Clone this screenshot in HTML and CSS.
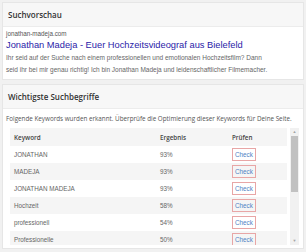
FILE: index.html
```html
<!DOCTYPE html>
<html lang="de">
<head>
  <meta charset="UTF-8">
  <meta name="viewport" content="width=device-width, initial-scale=1.0">
  <title>SEO Check</title>
  <link rel="stylesheet" href="styles.css">
</head>
<body>
  <section class="card">
    <h2 class="card-head">Suchvorschau</h2>
    <div class="card-body serp">
      <p class="serp-url">jonathan-madeja.com</p>
      <p class="serp-title">Jonathan Madeja - Euer Hochzeitsvideograf aus Bielefeld</p>
      <p class="serp-desc">Ihr seid auf der Suche nach einem professionellen und emotionalen Hochzeitsfilm? Dann seid ihr bei mir genau richtig! Ich bin Jonathan Madeja und leidenschaftlicher Filmemacher.</p>
    </div>
  </section>

  <section class="card">
    <h2 class="card-head">Wichtigste Suchbegriffe</h2>
    <div class="card-body">
      <p class="intro">Folgende Keywords wurden erkannt. Überprüfe die Optimierung dieser Keywords für Deine Seite.</p>
      <div class="table-wrap">
        <div class="table-clip">
          <table class="keywords">
            <thead>
              <tr><th>Keyword</th><th>Ergebnis</th><th>Prüfen</th></tr>
            </thead>
            <tbody>
              <tr><td>JONATHAN</td><td>93%</td><td><a href="#" class="check">Check</a></td></tr>
              <tr><td>MADEJA</td><td>93%</td><td><a href="#" class="check">Check</a></td></tr>
              <tr><td>JONATHAN MADEJA</td><td>93%</td><td><a href="#" class="check">Check</a></td></tr>
              <tr><td>Hochzeit</td><td>58%</td><td><a href="#" class="check">Check</a></td></tr>
              <tr><td>professionell</td><td>54%</td><td><a href="#" class="check">Check</a></td></tr>
              <tr><td>Professionelle</td><td>50%</td><td><a href="#" class="check">Check</a></td></tr>
              <tr><td>Filmemacher</td><td>47%</td><td><a href="#" class="check">Check</a></td></tr>
            </tbody>
          </table>
        </div>
        <div class="scrollbar" aria-hidden="true">
          <span class="arrow">▲</span>
          <span class="track"><span class="thumb"></span></span>
          <span class="arrow">▼</span>
        </div>
      </div>
    </div>
  </section>
</body>
</html>
```

FILE: styles.css
```css
html, body {
  margin: 0;
  padding: 0;
  background: #f1f1f1;
  font-family: 'Open Sans', sans-serif;
  color: #444;
}

body {
  padding: 2px;
}

.card {
  background: #fff;
  border: 1px solid #e6e6e6;
  margin-bottom: 4px;
}

.card-head {
  margin: 0;
  padding: 6px 5px 6px;
  font-size: 8px;
  font-weight: 600;
  color: #333;
  background: #f7f7f7;
  border-bottom: 1px solid #ececec;
}

.card-body {
  padding: 2px 3px 3px;
}

.serp p {
  margin: 0;
  font-family: 'Liberation Sans', Arial, sans-serif;
}

.serp-url {
  font-size: 6.3px;
  color: #555;
  line-height: 10px;
}

.serp-title {
  font-size: 9.3px;
  color: #2a22a8;
  line-height: 13px;
}

.serp-desc {
  max-width: 268px;
  font-size: 6.5px;
  color: #666;
  line-height: 12px;
}

.intro {
  margin: 2px 0 3px;
  font-size: 6.3px;
  line-height: 12px;
  color: #555;
}

.table-wrap {
  display: flex;
  margin: 0 1px 0 4px;
  height: 117px;
}

.table-clip {
  flex: 1;
  overflow: hidden;
}

.scrollbar {
  width: 9px;
  margin-left: 3px;
  display: flex;
  flex-direction: column;
  background: #f1f1f1;
}

.arrow {
  height: 8px;
  font-size: 4px;
  line-height: 8px;
  text-align: center;
  color: #a3a3a3;
}

.track {
  flex: 1;
  padding: 0 1px;
}

.thumb {
  display: block;
  height: 56px;
  background: #c1c1c1;
}

.keywords {
  width: 100%;
  border-collapse: collapse;
  font-size: 6.3px;
  color: #666;
}

.keywords th {
  text-align: left;
  font-weight: 600;
  color: #444;
  background: #f5f5f5;
  height: 18px;
  padding: 0 4px;
}

.keywords td {
  height: 17px;
  padding: 0 4px;
  font-family: 'Liberation Sans', Arial, sans-serif;
}

.keywords th:nth-child(1) {
  width: 138px;
}

.keywords th:nth-child(2) {
  width: 64px;
}

.keywords tbody tr:nth-child(even) td {
  background: #f5f5f5;
}

.check {
  display: inline-block;
  padding: 1px 2px;
  border: 1px solid #e8a6a6;
  color: #4d82c4;
  text-decoration: none;
  line-height: 9px;
}
```
